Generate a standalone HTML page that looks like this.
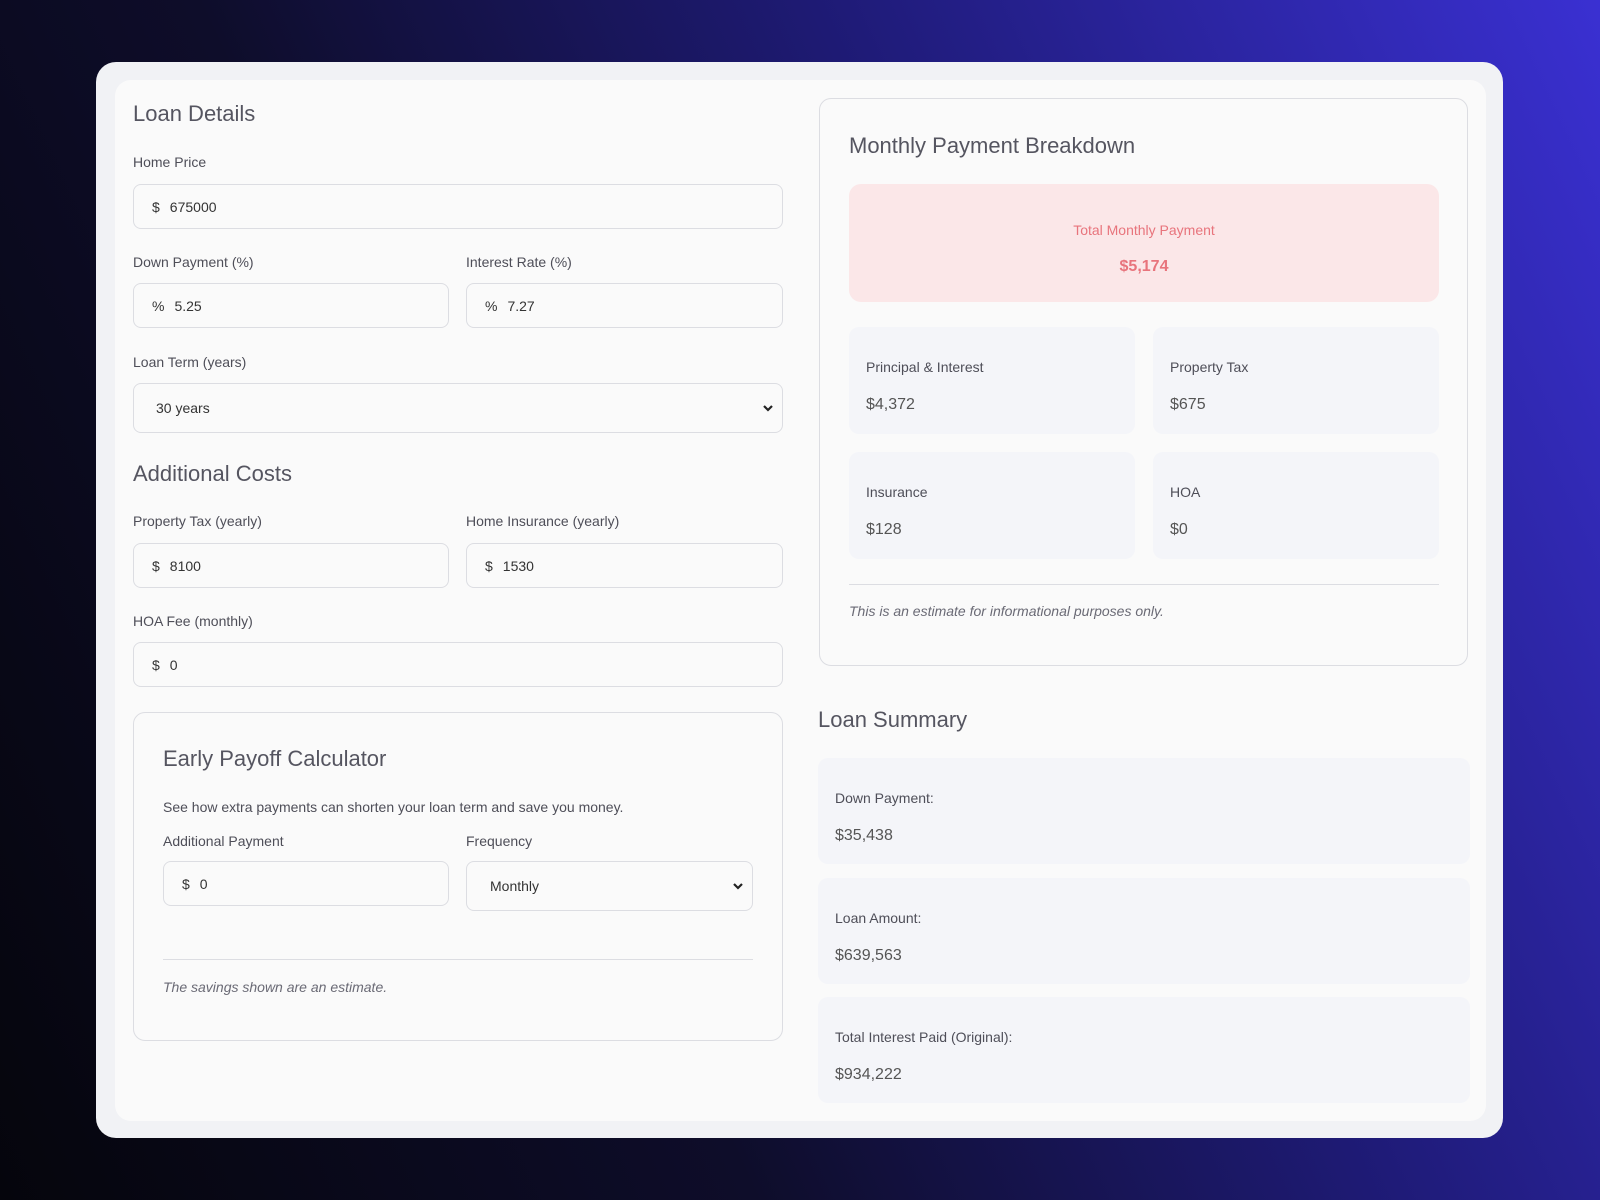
<!DOCTYPE html>
<html><head><meta charset="utf-8"><style>
*{box-sizing:border-box;margin:0;padding:0}
body{width:1600px;height:1200px;overflow:hidden;font-family:"Liberation Sans",sans-serif;color:#4b4b55;background:linear-gradient(65deg,#05050c 0%,#0e0d2a 35%,#1f1b78 65%,#3a30d2 100%);position:relative}
.abs{position:absolute}
.outer{left:96px;top:62px;width:1407px;height:1076px;background:#f1f2f5;border-radius:20px}
.inner{left:115px;top:80px;width:1371px;height:1041px;background:#fafafa;border-radius:16px}
.h{font-size:22px;color:#555560}
.lbl{font-size:14px;color:#4e4e58}
.inp{border:1.5px solid #dcdde2;border-radius:8px;background:#fafafa;font-size:14px;color:#333;padding-left:18px;display:flex;align-items:center}
.inp b{font-weight:normal;margin-right:10px}
.chev{position:absolute;right:8px;top:50%;margin-top:-4px}
.card{border:1.5px solid #dcdde2;border-radius:12px}
.cell{background:#f4f5f9;border-radius:10px}
.cell .l{position:absolute;left:17px;top:32px;font-size:14px;color:#4e4e58}
.cell .v{position:absolute;left:17px;top:69px;font-size:16px;color:#555}
.note{font-size:14px;font-style:italic;color:#6a6a75}
.hr{height:1px;background:#dcdde2}
</style></head><body>
<div class="abs outer"></div>
<div class="abs inner"></div>

<div class="abs h" style="left:133px;top:101px">Loan Details</div>
<div class="abs lbl" style="left:133px;top:154px">Home Price</div>
<div class="abs inp" style="left:133px;top:184px;width:650px;height:45px"><b>$</b>675000</div>
<div class="abs lbl" style="left:133px;top:254px">Down Payment (%)</div>
<div class="abs lbl" style="left:466px;top:254px">Interest Rate (%)</div>
<div class="abs inp" style="left:133px;top:283px;width:316px;height:45px"><b>%</b>5.25</div>
<div class="abs inp" style="left:466px;top:283px;width:317px;height:45px"><b>%</b>7.27</div>
<div class="abs lbl" style="left:133px;top:354px">Loan Term (years)</div>
<div class="abs inp" style="left:133px;top:383px;width:650px;height:50px;padding-left:22px">30 years<svg class="chev" width="12" height="8" viewBox="0 0 12 8"><path d="M2 2l4 4 4-4" stroke="#222" stroke-width="2.2" fill="none"/></svg></div>

<div class="abs h" style="left:133px;top:461px">Additional Costs</div>
<div class="abs lbl" style="left:133px;top:513px">Property Tax (yearly)</div>
<div class="abs lbl" style="left:466px;top:513px">Home Insurance (yearly)</div>
<div class="abs inp" style="left:133px;top:543px;width:316px;height:45px"><b>$</b>8100</div>
<div class="abs inp" style="left:466px;top:543px;width:317px;height:45px"><b>$</b>1530</div>
<div class="abs lbl" style="left:133px;top:613px">HOA Fee (monthly)</div>
<div class="abs inp" style="left:133px;top:642px;width:650px;height:45px"><b>$</b>0</div>

<div class="abs card" style="left:133px;top:712px;width:650px;height:329px"></div>
<div class="abs h" style="left:163px;top:746px">Early Payoff Calculator</div>
<div class="abs lbl" style="left:163px;top:799px">See how extra payments can shorten your loan term and save you money.</div>
<div class="abs lbl" style="left:163px;top:833px">Additional Payment</div>
<div class="abs lbl" style="left:466px;top:833px">Frequency</div>
<div class="abs inp" style="left:163px;top:861px;width:286px;height:45px"><b>$</b>0</div>
<div class="abs inp" style="left:466px;top:861px;width:287px;height:50px;padding-left:23px">Monthly<svg class="chev" width="12" height="8" viewBox="0 0 12 8"><path d="M2 2l4 4 4-4" stroke="#222" stroke-width="2.2" fill="none"/></svg></div>
<div class="abs hr" style="left:163px;top:959px;width:590px"></div>
<div class="abs note" style="left:163px;top:979px">The savings shown are an estimate.</div>

<div class="abs card" style="left:819px;top:98px;width:649px;height:568px"></div>
<div class="abs h" style="left:849px;top:133px">Monthly Payment Breakdown</div>
<div class="abs" style="left:849px;top:184px;width:590px;height:118px;background:#fbe7e8;border-radius:12px"></div>
<div class="abs" style="left:849px;top:222px;width:590px;text-align:center;font-size:14px;color:#e8747c">Total Monthly Payment</div>
<div class="abs" style="left:849px;top:258px;width:590px;text-align:center;font-size:16px;color:#e8747c;font-weight:bold">$5,174</div>
<div class="abs cell" style="left:849px;top:327px;width:286px;height:107px"><div class="l">Principal &amp; Interest</div><div class="v">$4,372</div></div>
<div class="abs cell" style="left:1153px;top:327px;width:286px;height:107px"><div class="l">Property Tax</div><div class="v">$675</div></div>
<div class="abs cell" style="left:849px;top:452px;width:286px;height:107px"><div class="l">Insurance</div><div class="v">$128</div></div>
<div class="abs cell" style="left:1153px;top:452px;width:286px;height:107px"><div class="l">HOA</div><div class="v">$0</div></div>
<div class="abs hr" style="left:849px;top:584px;width:590px"></div>
<div class="abs note" style="left:849px;top:603px">This is an estimate for informational purposes only.</div>

<div class="abs h" style="left:818px;top:707px">Loan Summary</div>
<div class="abs cell" style="left:818px;top:758px;width:652px;height:106px"><div class="l">Down Payment:</div><div class="v">$35,438</div></div>
<div class="abs cell" style="left:818px;top:878px;width:652px;height:106px"><div class="l">Loan Amount:</div><div class="v">$639,563</div></div>
<div class="abs cell" style="left:818px;top:997px;width:652px;height:106px"><div class="l">Total Interest Paid (Original):</div><div class="v">$934,222</div></div>
</body></html>
